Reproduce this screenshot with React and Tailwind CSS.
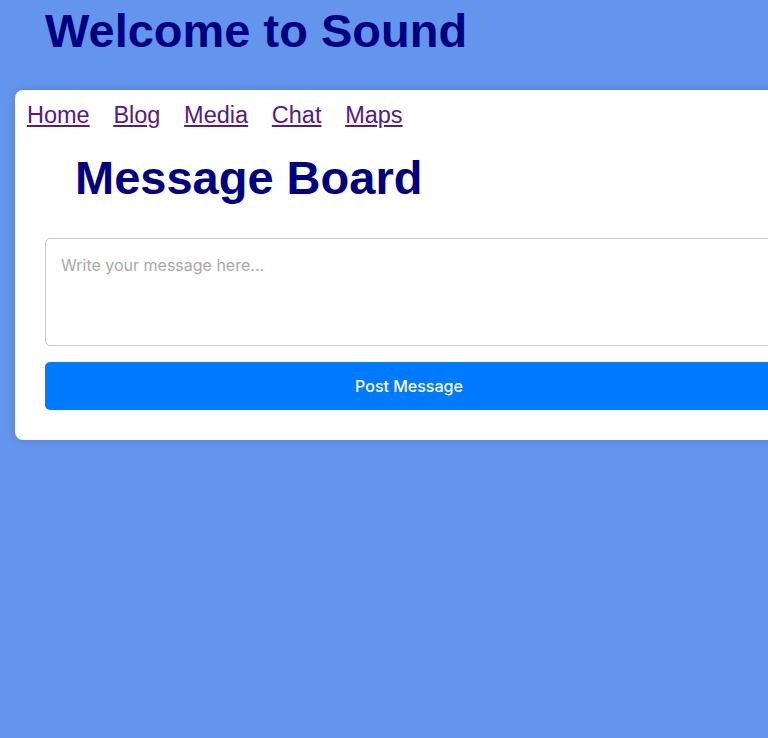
import { useState } from 'react';

export default function App() {
  const [message, setMessage] = useState('');
  const links = ['Home', 'Blog', 'Media', 'Chat', 'Maps'];

  return (
    <div
      className="min-h-[738px] w-full overflow-hidden bg-[#6495ED]"
      style={{ fontFamily: '"Liberation Sans", Arial, sans-serif' }}
    >
      <h1 className="ml-[45px] pt-[3px] text-[47px] font-bold leading-[55px] text-[#000080]">Welcome to Sound</h1>

      <div className="ml-[15px] mt-[32px] w-[788px] rounded-lg bg-white pb-[30px] pt-[11px] shadow-[0_0_10px_rgba(0,0,0,0.15)]">
        <nav className="flex gap-[23.7px] pl-[12px] text-[23.5px] leading-[28px]">
          {links.map((link) => (
            <a key={link} href="#" className="text-[#551A8B] underline">
              {link}
            </a>
          ))}
        </nav>

        <h2 className="ml-[60px] mt-[21px] text-[47px] font-bold leading-[55px] text-[#000080]">Message Board</h2>

        <div className="mt-[33px] px-[30px]">
          <textarea
            value={message}
            onChange={(e) => setMessage(e.target.value)}
            placeholder="Write your message here..."
            className="block h-[108px] w-full resize-none rounded-[5px] border border-[#cccccc] px-[15px] py-[14px] text-[16px] text-gray-800 placeholder:text-[#a9a9a9] outline-none"
            style={{ fontFamily: 'Inter, "Noto Sans", sans-serif' }}
          />
          <button
            className="mt-[16px] block h-[48px] w-full rounded-[5px] bg-[#007BFF] text-[16px] font-medium text-white"
            style={{ fontFamily: 'Inter, "Noto Sans", sans-serif' }}
          >
            Post Message
          </button>
        </div>
      </div>
    </div>
  );
}
